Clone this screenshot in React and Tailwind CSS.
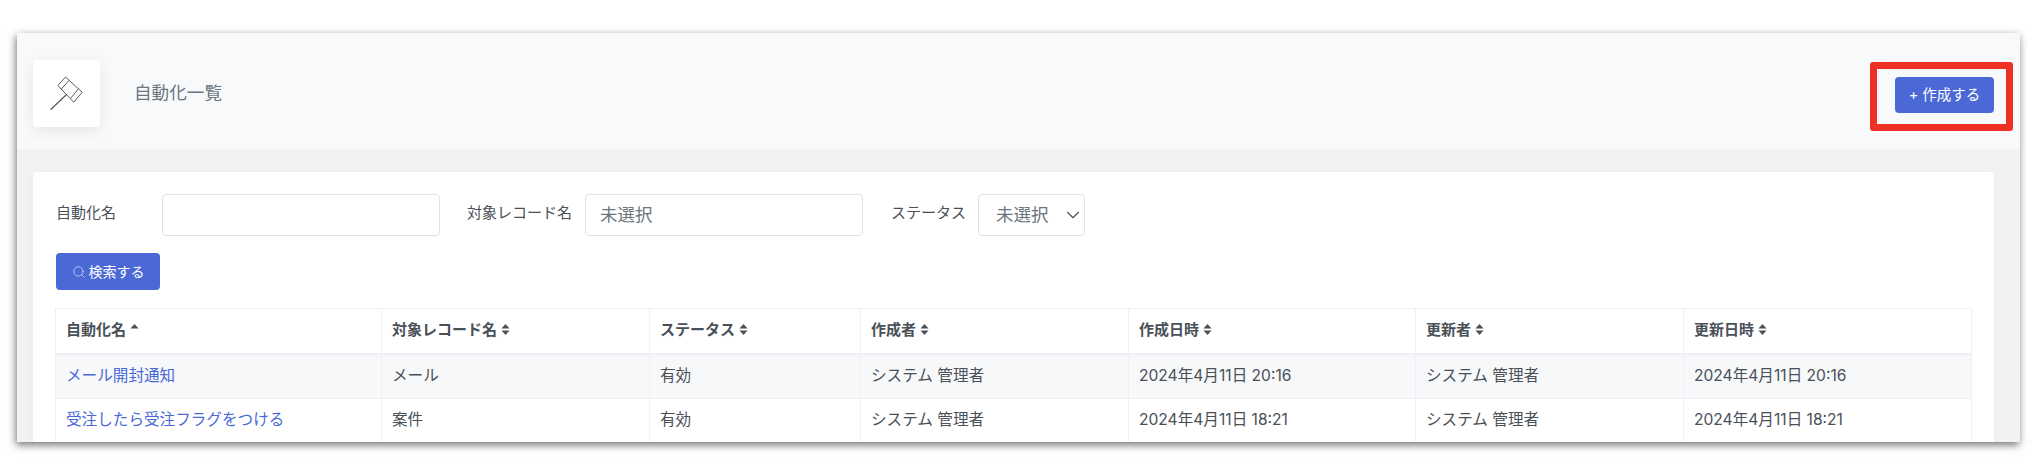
import React from 'react';
import { ChevronDown, Search } from 'lucide-react';

const columns = [
  { label: '自動化名', width: 'w-[326px]', sort: 'up' },
  { label: '対象レコード名', width: 'w-[268px]' },
  { label: 'ステータス', width: 'w-[211px]' },
  { label: '作成者', width: 'w-[268px]' },
  { label: '作成日時', width: 'w-[287px]' },
  { label: '更新者', width: 'w-[268px]' },
  { label: '更新日時', width: 'w-[288px]' },
];

const rows = [
  ['メール開封通知', 'メール', '有効', 'システム 管理者', '2024年4月11日 20:16', 'システム 管理者', '2024年4月11日 20:16'],
  ['受注したら受注フラグをつける', '案件', '有効', 'システム 管理者', '2024年4月11日 18:21', 'システム 管理者', '2024年4月11日 18:21'],
];

const SortIcon = ({ only }) => (
  <svg width="9" height="13" viewBox="0 0 9 13" className="ml-1 shrink-0 fill-[#495057]">
    <path d="M4.5 1 L8.5 5.5 H0.5 Z" />
    {!only && <path d="M4.5 12 L8.5 7.5 H0.5 Z" />}
  </svg>
);

const GavelIcon = () => (
  <svg width="36" height="36" viewBox="0 0 36 36" fill="none" stroke="#555b61" strokeWidth="1">
    <path d="M16.5 1 L33.2 16.2 L24.8 26.2 L8.8 9.5 Z" />
    <path d="M20 4.5 L12.3 13" />
    <path d="M29.5 12.7 L21.5 22.5" />
    <path d="M17.5 18.5 L1.5 33.8" strokeWidth="1.2" />
  </svg>
);

const App = () => {
  return (
    <div className="h-[460px] w-[2042px] overflow-hidden bg-white pt-[33px] pl-[17px] font-['Inter','Noto_Sans_CJK_JP',sans-serif] text-[#495057]">
      <div className="flex h-[409px] w-[2003px] flex-col overflow-hidden bg-[#f1f2f4] shadow-[-1px_3px_8px_rgba(0,0,0,0.55)]">
        <header className="flex h-[116px] shrink-0 items-start justify-between bg-[#f8f9fb] pt-[27px] pr-[7px] pl-[16px]">
          <div className="flex items-center">
            <div className="flex h-[67px] w-[67px] items-center justify-center rounded-[4px] bg-white shadow-[0_4px_14px_rgba(0,0,0,0.08)]">
              <GavelIcon />
            </div>
            <h1 className="ml-[34px] text-[17.6px] font-normal text-[#6c757d]">自動化一覧</h1>
          </div>
          <div className="mt-[2px] flex h-[69px] w-[143px] items-center rounded-[3px] border-[7px] border-[#ee3124] pb-[3px] pl-[18px]">
            <button className="h-[36px] w-[99px] shrink-0 rounded-[4px] bg-[#4a69d6] text-[14.5px] text-white">+ 作成する</button>
          </div>
        </header>

        <main className="flex-1 px-[16px] pt-[23px]">
          <section className="h-full w-[1961px] rounded-t-[4px] bg-white pt-[22px] pl-[23px] shadow-[0_2px_12px_rgba(0,0,0,0.04)]">
            <div className="flex h-[42px] items-center text-[15px]">
              <label className="mb-[3px] w-[106px]">自動化名</label>
              <input className="h-[42px] w-[278px] rounded-[4px] border border-[#e0e2e8] bg-white" />
              <label className="mb-[3px] ml-[27px] w-[118px]">対象レコード名</label>
              <div className="flex h-[42px] w-[278px] items-center rounded-[4px] border border-[#e0e2e8] pl-[14px] text-[17.5px] text-[#6c757d]">未選択</div>
              <label className="mb-[3px] ml-[28px] w-[87px]">ステータス</label>
              <div className="flex h-[42px] w-[107px] items-center justify-between rounded-[4px] border border-[#e0e2e8] pl-[17px] text-[17.5px] text-[#6c757d]">
                未選択
                <ChevronDown size={22} strokeWidth={1.2} className="text-[#495057]" />
              </div>
            </div>

            <button className="mt-[17px] flex h-[37px] w-[104px] items-center justify-center gap-[3px] rounded-[4px] bg-[#4a69d6] text-[14px] text-white">
              <Search size={14} strokeWidth={1} />
              検索する
            </button>

            <table className="mt-[18px] -ml-px w-[1916px] table-fixed border-collapse text-[15.6px]">
              <thead>
                <tr className="h-[45px] border-b-2 border-[#eef0f3]">
                  {columns.map((col) => (
                    <th key={col.label} className={`${col.width} border border-[#eff1f4] px-[10px] pb-[2px] text-left text-[15px] font-bold`}>
                      <span className="flex items-center">
                        {col.label}
                        <SortIcon only={col.sort === 'up'} />
                      </span>
                    </th>
                  ))}
                </tr>
              </thead>
              <tbody>
                {rows.map((row, i) => (
                  <tr key={row[0]} className={i === 0 ? 'h-[45px] bg-[#f7f8f9]' : 'h-[45px] bg-white'}>
                    {row.map((cell, j) => (
                      <td key={j} className={`border border-[#eff1f4] px-[10px] pb-[2px] ${j === 0 ? 'text-[#4a69d6]' : ''}`}>
                        {cell}
                      </td>
                    ))}
                  </tr>
                ))}
              </tbody>
            </table>
          </section>
        </main>
      </div>
    </div>
  );
};

export default App;
